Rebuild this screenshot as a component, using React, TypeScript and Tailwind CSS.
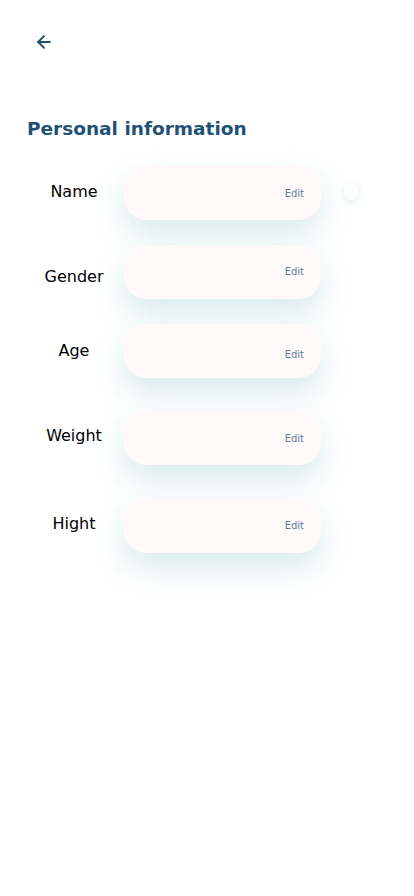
import { ArrowLeft } from "lucide-react";

const rows = [
  { label: "Name", mt: "mt-[23px]", labelShift: "-translate-y-[1px]", editShift: "" },
  { label: "Gender", mt: "mt-[25px]", labelShift: "translate-y-[5px]", editShift: "-translate-y-[1px]" },
  { label: "Age", mt: "mt-[25px]", labelShift: "", editShift: "translate-y-[3px]" },
  { label: "Weight", mt: "mt-[33px]", labelShift: "-translate-y-[2px]", editShift: "" },
  { label: "Hight", mt: "mt-[34px]", labelShift: "-translate-y-[2px]", editShift: "-translate-y-[1px]" },
];

export default function App() {
  return (
    <div
      className="relative min-h-[896px] w-[414px] bg-white"
      style={{ fontFamily: '"DejaVu Sans", "Noto Sans", sans-serif' }}
    >
      <div className="pt-[32px] pl-[34px]">
        <ArrowLeft className="h-5 w-5 text-[#1e4f73]" strokeWidth={2.3} />
      </div>

      <h1 className="mt-[63px] pl-[27px] text-[18.5px] font-bold leading-[28px] text-[#1f5276]">
        Personal information
      </h1>

      <div className="pl-[24px]">
        {rows.map((row) => (
          <div key={row.label} className={`flex items-center ${row.mt}`}>
            <div className={`w-[100px] text-center text-[16px] text-black ${row.labelShift}`}>
              {row.label}
            </div>
            <div className="flex h-[54px] w-[197px] items-center justify-end rounded-[22px] bg-[#fffaf9] pr-[17px] shadow-[0_14px_30px_rgba(170,210,210,0.45)]">
              <span className={`text-[10px] text-[#5c7f98] ${row.editShift}`}>Edit</span>
            </div>
          </div>
        ))}
      </div>

      <div className="absolute left-[344px] top-[183px] h-[17px] w-[14px] rounded-full bg-white shadow-[0_2px_6px_rgba(200,225,225,0.6)]" />
    </div>
  );
}
